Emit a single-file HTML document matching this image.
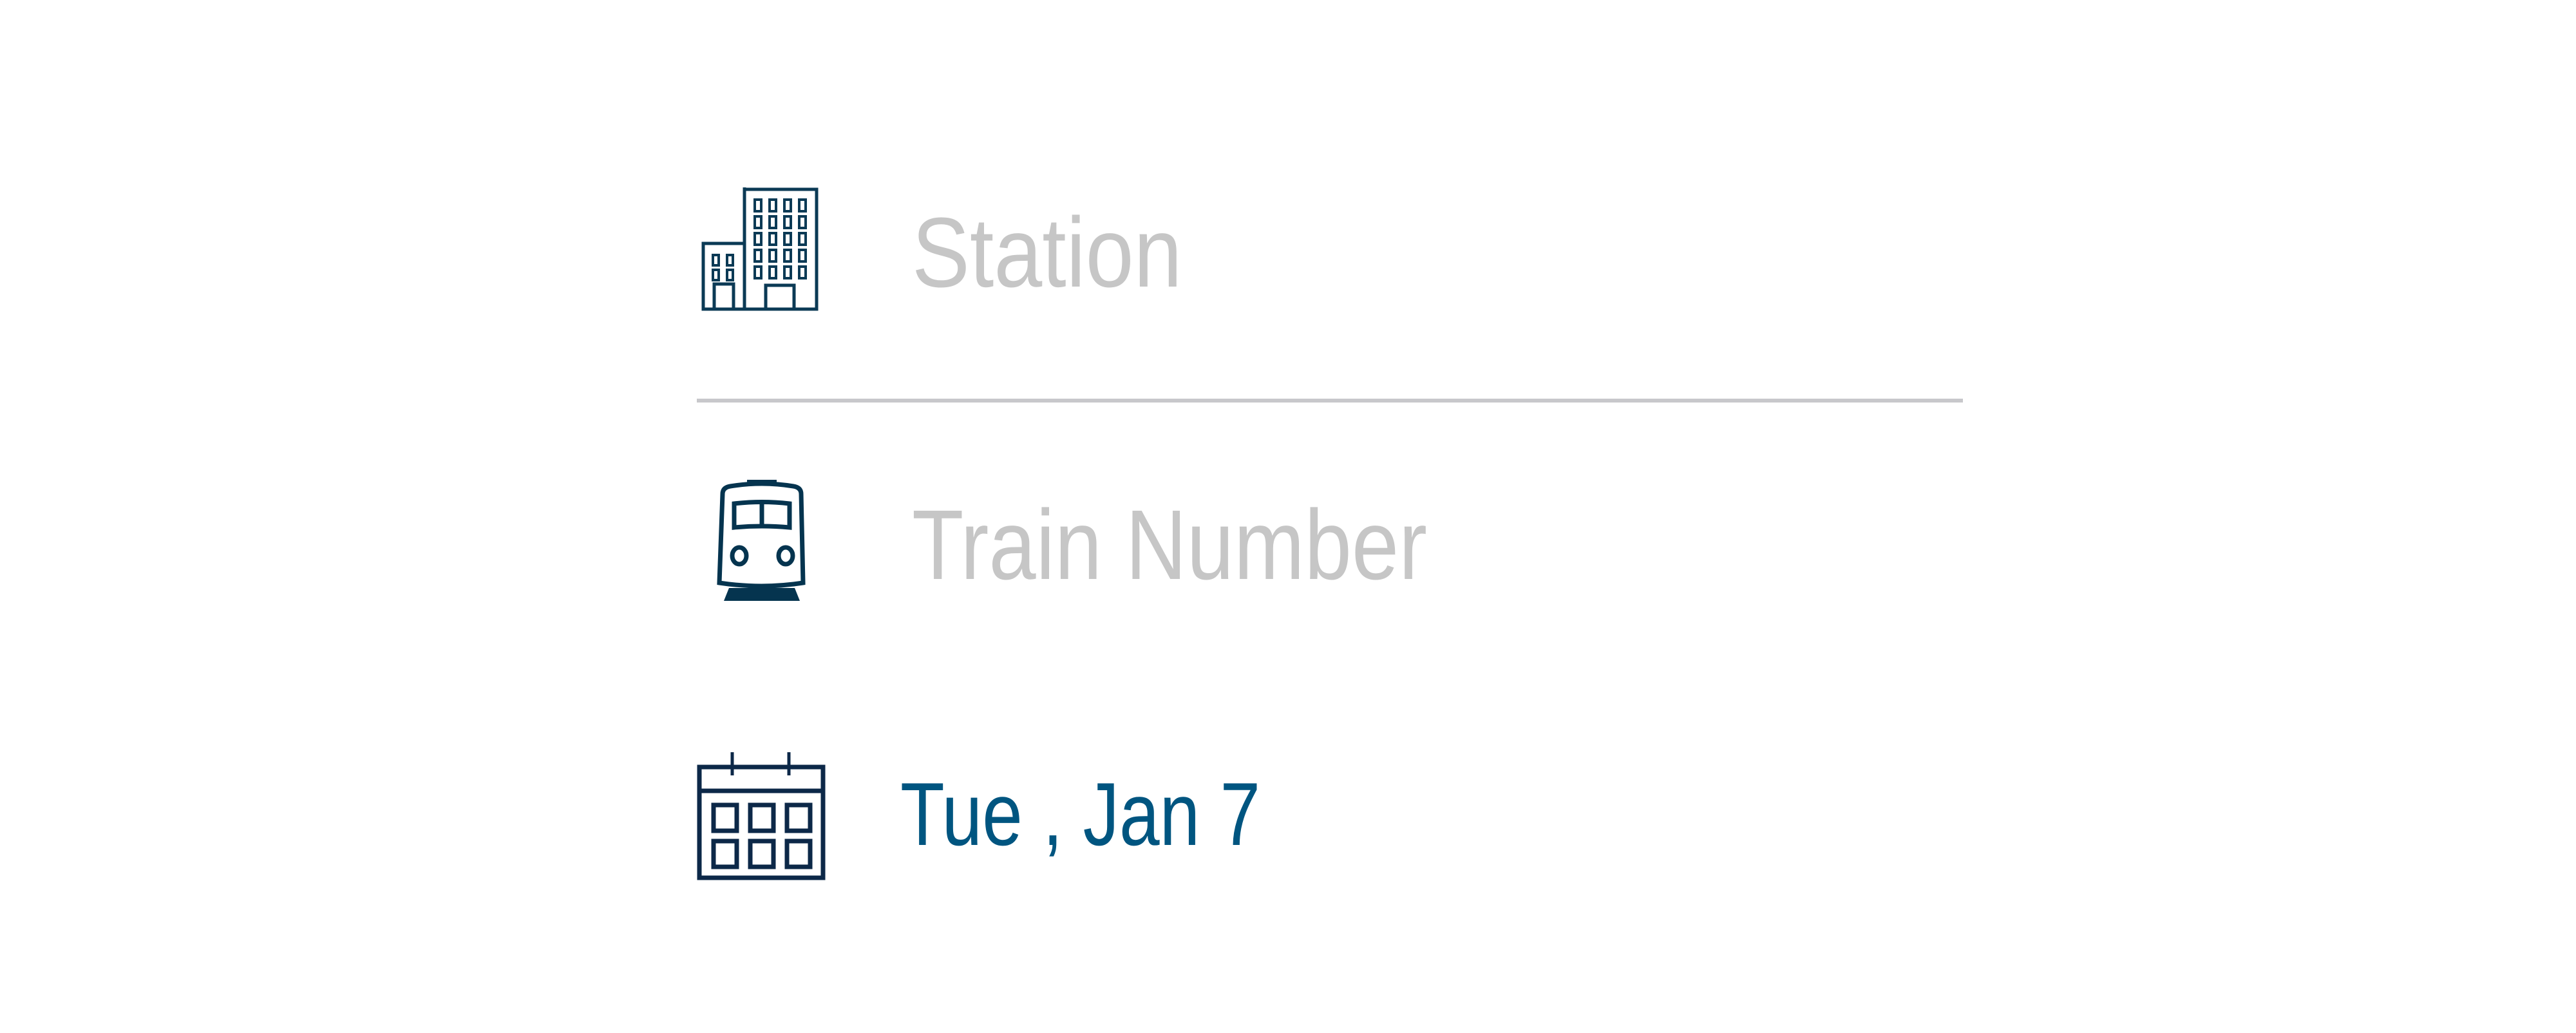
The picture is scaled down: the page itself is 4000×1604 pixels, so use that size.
<!DOCTYPE html>
<html><head><meta charset="utf-8"><style>
html,body{margin:0;padding:0;background:#fff;width:4000px;height:1604px;overflow:hidden;position:relative;font-family:"Liberation Sans",sans-serif}
.t{position:absolute;white-space:nowrap;line-height:1;transform-origin:left top}
svg{position:absolute}
</style></head><body>
<svg style="left:1089px;top:291px" width="182" height="192" viewBox="0 0 182 192" fill="none" stroke="#0b3a55" stroke-width="5">
<rect x="67" y="3" width="112" height="186"/>
<path d="M67 189 V0"/>
<path d="M100 189 V152 H144 V189"/>
<rect x="3" y="87" width="64" height="102"/>
<path d="M20 189 V150 H50 V189"/>
<g stroke-width="4">
<rect x="83" y="19" width="10" height="18"/><rect x="106" y="19" width="10" height="18"/><rect x="129" y="19" width="10" height="18"/><rect x="152" y="19" width="10" height="18"/>
<rect x="83" y="45" width="10" height="18"/><rect x="106" y="45" width="10" height="18"/><rect x="129" y="45" width="10" height="18"/><rect x="152" y="45" width="10" height="18"/>
<rect x="83" y="71" width="10" height="18"/><rect x="106" y="71" width="10" height="18"/><rect x="129" y="71" width="10" height="18"/><rect x="152" y="71" width="10" height="18"/>
<rect x="83" y="97" width="10" height="18"/><rect x="106" y="97" width="10" height="18"/><rect x="129" y="97" width="10" height="18"/><rect x="152" y="97" width="10" height="18"/>
<rect x="83" y="123" width="10" height="18"/><rect x="106" y="123" width="10" height="18"/><rect x="129" y="123" width="10" height="18"/><rect x="152" y="123" width="10" height="18"/>
<rect x="18" y="105" width="9" height="16"/><rect x="40" y="105" width="9" height="16"/>
<rect x="18" y="128" width="9" height="16"/><rect x="40" y="128" width="9" height="16"/>
</g>
</svg>
<div class="t" style="left:1416px;top:315px;font-size:154px;color:#c6c6c6;transform:scaleX(0.875)">Station</div>
<div style="position:absolute;left:1082px;top:619px;width:1966px;height:6px;background:#c8c8cb"></div>
<svg style="left:1112px;top:745px" width="150" height="190" viewBox="0 0 150 190" fill="none" stroke="#05344f" stroke-width="7">
<path d="M48 4 H94" stroke-width="9"/>
<path d="M10 22 Q10 12 22 10 Q71 2 120 10 Q132 12 132 22 L135 160 Q71 170 5 160 Z"/>
<path d="M28 37 Q71 32 114 37 V74 Q71 70 28 74 Z"/>
<path d="M71 35 V72"/>
<ellipse cx="36" cy="118" rx="11" ry="13"/>
<ellipse cx="108" cy="118" rx="11" ry="13"/>
<path d="M20 168 H122 L130 188 H12 Z" fill="#05344f" stroke="none"/>
</svg>
<div class="t" style="left:1416px;top:769px;font-size:154px;color:#c6c6c6;transform:scaleX(0.855)">Train Number</div>
<svg style="left:1082px;top:1168px" width="200" height="200" viewBox="0 0 200 200" fill="none" stroke="#0c2848" stroke-width="7">
<rect x="4" y="23" width="192" height="172"/>
<path d="M4 60 H196"/>
<path d="M55 0 V36 M143 0 V36" stroke-width="5"/>
<rect x="26" y="82" width="36" height="40"/><rect x="83" y="82" width="36" height="40"/><rect x="140" y="82" width="36" height="40"/>
<rect x="26" y="138" width="36" height="40"/><rect x="83" y="138" width="36" height="40"/><rect x="140" y="138" width="36" height="40"/>
</svg>
<div class="t" style="left:1398px;top:1195px;font-size:139px;color:#005580;transform:scaleX(0.81)">Tue , Jan 7</div>
</body></html>
